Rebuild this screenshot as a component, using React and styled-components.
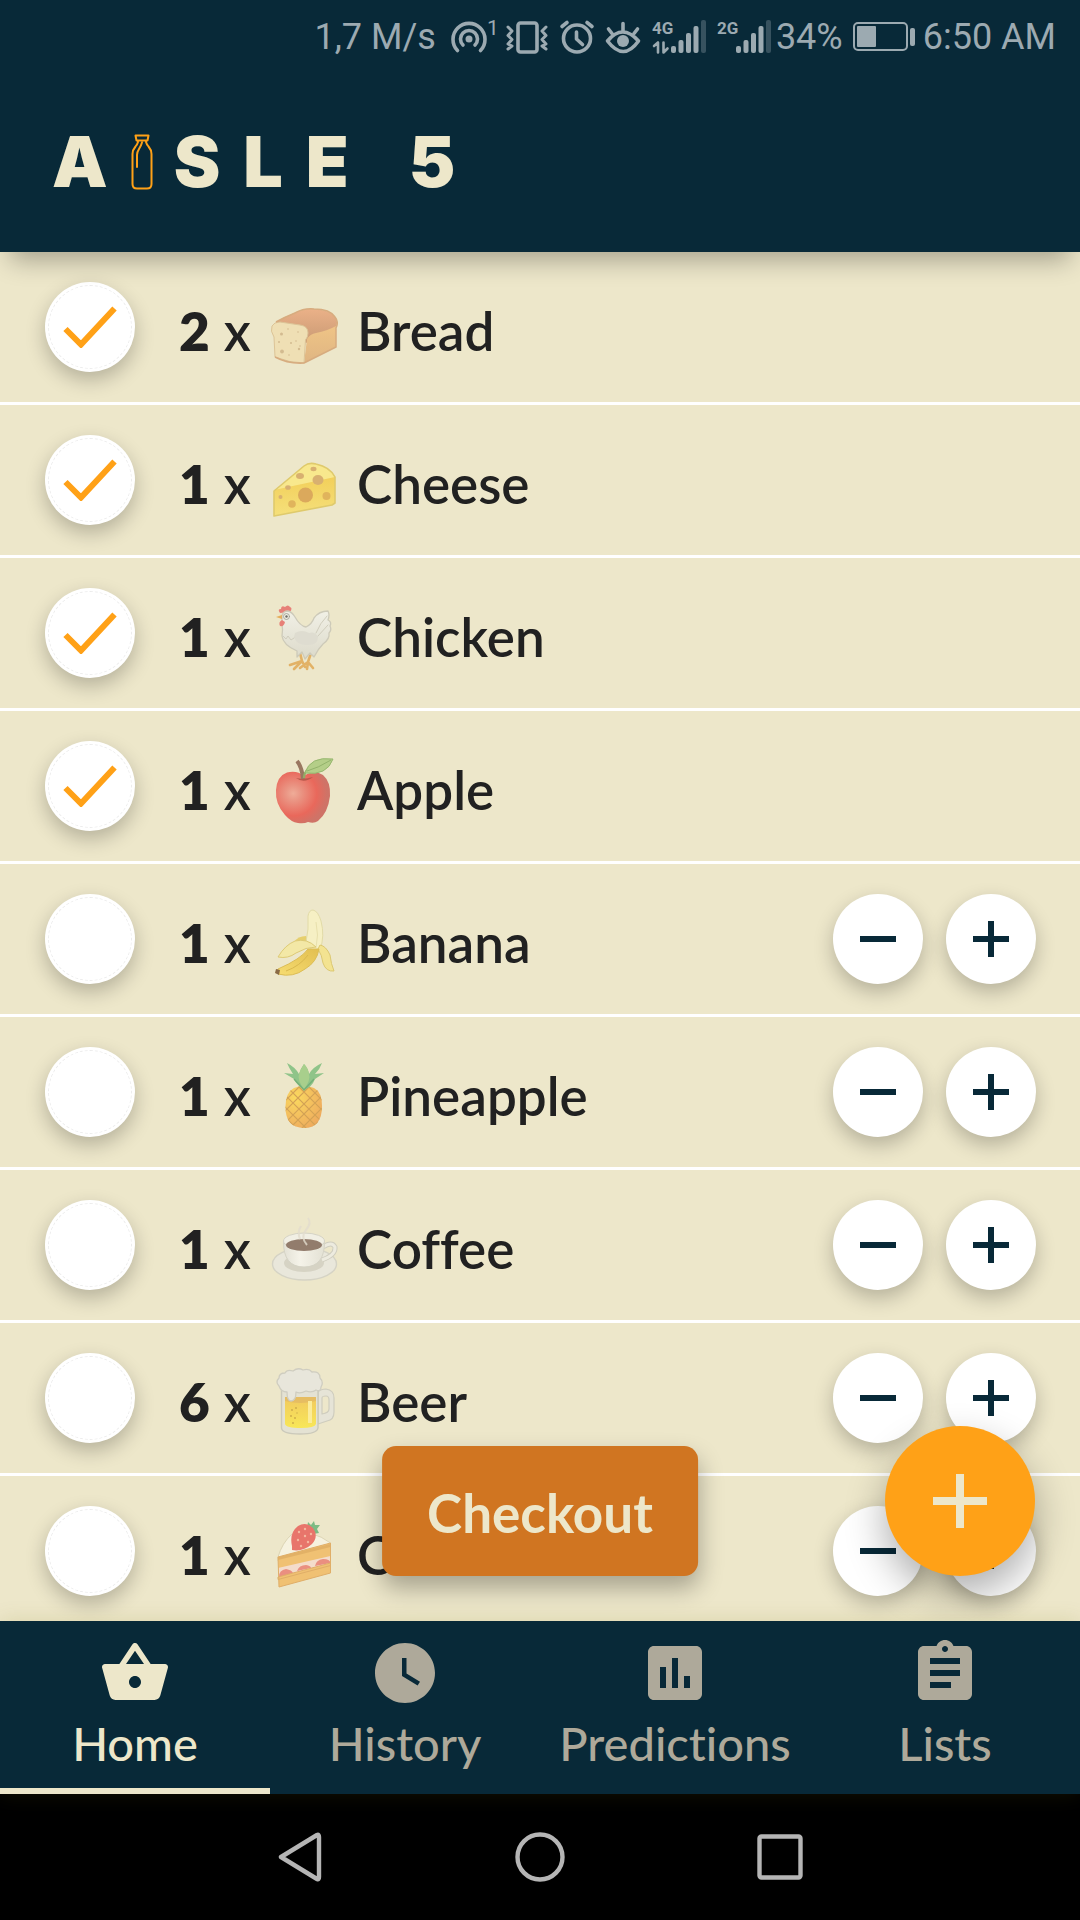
import React from "react";
import styled, { createGlobalStyle, css } from "styled-components";
import { MdShoppingBasket, MdWatchLater, MdAssessment } from "react-icons/md";

const color = {
  navy: "#082938",
  cream: "#ede7ca",
  amber: "#ffa117",
  rust: "#d07521",
  ink: "#212121",
  muted: "#aea99a",
  status: "#9caab1",
  nav: "#b5b5b5",
};

const GlobalStyle = createGlobalStyle`
  * { box-sizing: border-box; }
  html, body { margin: 0; background: #000; }
  body, button, input { font-family: Lato, "Open Sans", sans-serif; }
  body { font-variant-ligatures: none; }
  button { border: 0; padding: 0; cursor: pointer; }
  svg { display: block; flex: none; }
`;

const Screen = styled.div`
  display: flex;
  flex-direction: column;
  height: 100vh;
  overflow: hidden;
`;

const Header = styled.header`
  position: relative;
  z-index: 2;
  flex: none;
  background: ${color.navy};
  box-shadow: 0 18px 24px -10px rgba(0, 0, 0, 0.3);
`;

const StatusBar = styled.div`
  display: flex;
  align-items: center;
  justify-content: flex-end;
  height: 74px;
  padding-right: 24px;
  color: ${color.status};
  font: 400 36px/40px Roboto, sans-serif;
`;

const StatusIcons = styled.div`
  display: flex;
  align-items: center;
  margin: 0 4px 0 14px;
`;

const BatteryIcon = styled.svg`
  margin: 0 7px 0 10px;
`;

const TitleBar = styled.div`
  display: flex;
  align-items: center;
  height: 178px;
  padding: 0 52px 2px;
`;

const Title = styled.h1`
  display: flex;
  align-items: center;
  margin: 0;
  color: ${color.cream};
  font: 900 70px/80px Inter, "Liberation Sans", sans-serif;
  letter-spacing: 23px;
  white-space: pre;
`;

const Bottle = styled.svg`
  margin-right: 21px;
`;

const Main = styled.main`
  position: relative;
  flex: 1;
  min-height: 0;
  background: ${color.cream};
`;

const List = styled.ul`
  height: 100%;
  margin: 0;
  padding: 0;
  overflow-y: auto;
  scrollbar-width: none;
  list-style: none;
`;

const Row = styled.li`
  display: flex;
  align-items: center;
  height: 153px;
  padding: 0 44px 0 45px;
  border-bottom: 3px solid #fff;
`;

const ItemLabel = styled.label`
  display: flex;
  flex: 1;
  align-items: center;
  color: ${color.ink};
  font-size: 53px;
  line-height: 60px;
  font-weight: 600;
`;

const disc = css`
  width: 90px;
  height: 90px;
  border-radius: 50%;
  background: #fff;
  box-shadow: 0 8px 20px rgba(0, 0, 0, 0.24);
`;

const CheckDisc = styled.span`
  ${disc}
  display: grid;
  flex: none;
  margin-right: 44px;
  > * {
    grid-area: 1 / 1;
    place-self: center;
  }
`;

const Tick = styled.input`
  width: 84px;
  height: 84px;
  margin: 0;
  border: 1px dashed #ececec;
  border-radius: 50%;
  appearance: none;
  & + svg {
    visibility: hidden;
    pointer-events: none;
  }
  &:checked + svg {
    visibility: visible;
  }
`;

const Wording = styled.span`
  display: flex;
  align-items: center;
  padding-top: 8px;
`;

const Quantity = styled.span`
  display: flex;
  gap: 14px;
  width: 91px;
  b {
    font-weight: 800;
  }
`;

const Picture = styled.svg`
  width: 68px;
  height: 68px;
  margin-right: 19px;
`;

const Steppers = styled.div`
  display: flex;
  gap: 23px;
`;

const StepButton = styled.button`
  ${disc}
  display: grid;
  place-items: center;
`;

const CheckoutButton = styled.button`
  position: absolute;
  bottom: 45px;
  left: 50%;
  transform: translateX(-50%);
  height: 130px;
  padding: 4px 45px 0;
  border-radius: 14px;
  background: ${color.rust};
  box-shadow: 0 12px 24px rgba(0, 0, 0, 0.3);
  color: ${color.cream};
  font-size: 53px;
  line-height: 60px;
  font-weight: 700;
`;

const AddButton = styled.button`
  position: absolute;
  right: 45px;
  bottom: 45px;
  display: grid;
  place-items: center;
  width: 150px;
  height: 150px;
  border-radius: 50%;
  background: ${color.amber};
  box-shadow: 0 18px 40px rgba(0, 0, 0, 0.32);
`;

const TabBar = styled.nav`
  position: relative;
  z-index: 1;
  display: grid;
  flex: none;
  grid-template-columns: repeat(4, 1fr);
  background: ${color.navy};
  box-shadow: 0 0 20px rgba(120, 110, 10, 0.16);
`;

const Tab = styled.a`
  display: flex;
  flex-direction: column;
  align-items: center;
  gap: 6px;
  height: 173px;
  padding-top: 16px;
  border-bottom: 6px solid ${(p) => (p.$active ? color.cream : "transparent")};
  color: ${(p) => (p.$active ? color.cream : color.muted)};
  font-size: 47px;
  line-height: 56px;
  font-weight: 500;
  text-decoration: none;
`;

const SystemBar = styled.nav`
  display: flex;
  flex: none;
  align-items: center;
  justify-content: center;
  gap: 170px;
  height: 126px;
  background: #000;
`;

const SystemButton = styled.button`
  display: grid;
  place-items: center;
  width: 70px;
  height: 70px;
  background: none;
`;

const stroke = (width) => ({
  fill: "none",
  stroke: "currentColor",
  strokeWidth: width,
  strokeLinecap: "round",
  strokeLinejoin: "round",
});

function SignalBars({ x }) {
  const tops = [45, 39, 32, 25];
  return (
    <g fill="currentColor">
      {tops.map((y, i) => (
        <rect key={y} x={x + i * 7.5} y={y} width="5" height={52 - y} rx="2" />
      ))}
      <rect x={x + 30} y="19" width="5" height="33" rx="2" opacity=".32" />
    </g>
  );
}

function StatusGlyphs() {
  return (
    <svg width="322" height="72" viewBox="450 0 322 72" aria-hidden="true">
      <g {...stroke(3.6)}>
        <path d="M457.500 49.500A16 16 0 1 1 480.500 49.500" />
        <path d="M463 44A8.500 8.500 0 1 1 475 44" />
      </g>
      <circle cx="469" cy="38" r="3.500" fill="currentColor" />
      <text x="487" y="34" fill="currentColor" fontSize="21">1</text>
      <g {...stroke(3.6)}>
        <rect x="518" y="22" width="19" height="29" rx="2.500" />
        <path d="M508 26l4 4-4 4.500 4 4-4 4.500 4 2-4 3M546 26l-4 4 4 4.500-4 4 4 4.500-4 2 4 3" strokeWidth="3" />
        <circle cx="577" cy="37.500" r="13.500" />
        <path d="M576.500 31v7l6 5.500M562 25.500l5-4M592 25.500l-5-4" />
        <path d="M607.500 40q15-18 31 0q-15 21-31 0zM623 22.500v7M608.500 28l3.500 4.500M637.500 28l-3.500 4.500" />
      </g>
      <circle cx="623" cy="40" r="6" fill="currentColor" />
      <g fill="currentColor" fontWeight="700" fontSize="17">
        <text x="652" y="33">4G</text>
        <text x="717" y="33">2G</text>
      </g>
      <path d="M654 45l4-3.500v10M663.500 41.500v10l4-4" {...stroke(2.6)} />
      <SignalBars x={671} />
      <SignalBars x={736} />
    </svg>
  );
}

function Plus({ size, weight, tint }) {
  const c = size / 2;
  return (
    <svg width={size} height={size} stroke={tint} strokeWidth={weight} aria-hidden="true">
      <path d={`M0 ${c}H${size}M${c} 0V${size}`} />
    </svg>
  );
}

function Minus() {
  return (
    <svg width="36" height="6" aria-hidden="true">
      <path d="M0 3H36" stroke={color.navy} strokeWidth="6" />
    </svg>
  );
}

function Clipboard() {
  return (
    <svg width="72" height="72" viewBox="0 0 24 24" fill="currentColor" aria-hidden="true">
      <path
        fillRule="evenodd"
        d="M19 3h-4.180C14.400 1.840 13.300 1 12 1s-2.400.840-2.820 2H5c-1.100 0-2 .900-2 2v14c0 1.100.900 2 2 2h14c1.100 0 2-.900 2-2V5c0-1.100-.900-2-2-2zm-7 0c.550 0 1 .450 1 1s-.450 1-1 1-1-.450-1-1 .450-1 1-1zm2 14H7v-2h7v2zm3-4H7v-2h10v2zm0-4H7V7h10v2z"
      />
    </svg>
  );
}

const bread = (
  <g strokeLinejoin="round">
    <linearGradient id="crust" x1="0" y1="0" x2="0" y2="1">
      <stop offset="0" stopColor="#ebb188" />
      <stop offset="1" stopColor="#c99a74" />
    </linearGradient>
    <linearGradient id="loafSide" x1="0" y1="0" x2="0" y2="1">
      <stop offset="0" stopColor="#efc486" />
      <stop offset="1" stopColor="#dfb582" />
    </linearGradient>
    <path d="M6 25Q14 20 24 16Q34 11 45 12Q66 14 67 25Q67 30 65 32L36 46L20 30z" fill="url(#crust)" />
    <path d="M66 32V50L34 66L37 42Q40 37 46 36Q57 34 66 29z" fill="url(#loafSide)" />
    <path d="M5 60L4 40Q0 34 2 29Q4 25 10 25L30 28Q38 29 38 36Q38 40 35.500 43L34 66Q20 66 5 60z" fill="#efdfb4" stroke="#dcc497" />
    <path d="M5 60Q18 67 34 66L66 50V31Q69 25 65 20Q60 12 44 12Q34 11 25 16Q15 20 6 25" fill="none" stroke="#d7ac7f" strokeWidth="1.500" />
    <g fill="#d3bb90">
      <circle cx="11.500" cy="37" r="1.500" />
      <circle cx="12" cy="54.500" r="1.900" />
      <circle cx="21" cy="46" r="1" />
      <circle cx="28" cy="35" r=".8" />
      <circle cx="18" cy="32" r=".8" />
      <circle cx="29" cy="52" r="1.200" />
      <circle cx="26" cy="44" r=".8" />
      <circle cx="9" cy="45" r="1" />
      <circle cx="19" cy="58" r=".8" />
      <circle cx="30" cy="49" r=".8" />
    </g>
  </g>
);

const cheese = (
  <g>
    <linearGradient id="cut" x1="0" y1="0" x2="0" y2="1">
      <stop offset="0" stopColor="#f2cf5a" />
      <stop offset="1" stopColor="#f5e07b" />
    </linearGradient>
    <path d="M4 41L34 16Q39 12 46 14Q60 17 65 27L64 33L4 42z" fill="#f8e88d" />
    <path d="M4 40L65 27V53L62 55L4 66z" fill="url(#cut)" />
    <path d="M4 41L34 16Q39 12 46 14Q60 17 65 27V53L62 55L4 66z" fill="none" stroke="#dfca6c" strokeWidth="1.600" strokeLinejoin="round" />
    <g fill="#d8b070">
      <circle cx="35.500" cy="45" r="7.500" fill="#dba95c" />
      <ellipse cx="48" cy="30" rx="5.500" ry="5" />
      <ellipse cx="30" cy="26" rx="4" ry="3" />
      <ellipse cx="43.500" cy="19" rx="3" ry="2.200" />
      <ellipse cx="18" cy="37.500" rx="2.800" ry="2.300" />
      <circle cx="10.500" cy="47" r="2" />
      <circle cx="22" cy="54" r="3.800" fill="#e0b45c" />
      <circle cx="56.500" cy="46" r="4" fill="#e0b45c" />
    </g>
  </g>
);

const chicken = (
  <g strokeLinejoin="round" strokeLinecap="round">
    <linearGradient id="plume" x1="0" y1="0" x2="0" y2="1">
      <stop offset="0" stopColor="#f1f0e6" />
      <stop offset="1" stopColor="#dcdaca" />
    </linearGradient>
    <path d="M10 10Q7 6 11 6Q11 2 15 4Q18 1 20 4Q23 5 20 9z" fill="#e78078" />
    <path d="M30 50L32 58L20 62M32 58L24 66M32 58L35 64M42 47L38 59L30 65M38 59L37 66M38 59L43 65" fill="none" stroke="#e2b266" strokeWidth="2.600" />
    <path d="M12 13Q13 8 18 8Q22 9 25 14Q30 23 36 24Q42 21 44 15Q49 8 58 8Q60 12 58 17Q62 19 60 23Q62 27 59 30Q60 36 53 41Q48 46 44 54L40 50L35 56L32 49L27 54L27 48Q13 42 12 33Q13 27 12 20z" fill="url(#plume)" stroke="#cdcab9" strokeWidth="1.300" />
    <path d="M25 30Q32 26 39 30Q45 28 48 34Q48 42 38 42Q27 43 24 34z" fill="#dedcd0" />
    <path d="M46 30Q50 20 57 13M48 33L58 22M13 33l3 3 2-3 3 4 3-2" fill="none" stroke="#d0cdbd" strokeWidth="1" />
    <path d="M12 12L6 14L12 16z" fill="#e5ae5c" />
    <path d="M12 17Q8 19 10 23Q14 24 15 19z" fill="#e78078" />
    <circle cx="16.500" cy="13.500" r="3" fill="#efeee2" stroke="#9b9a8f" strokeWidth=".8" />
    <circle cx="16.500" cy="13.500" r="1.200" fill="#6d6c66" />
  </g>
);

const apple = (
  <g>
    <radialGradient id="skin" cx=".32" cy=".42" r=".62">
      <stop offset="0" stopColor="#efac98" />
      <stop offset=".25" stopColor="#ea9382" />
      <stop offset=".7" stopColor="#e9685b" />
      <stop offset="1" stopColor="#cf7367" />
    </radialGradient>
    <path d="M34 20Q44 13 53 19Q61 26 60 40Q58 57 48 65Q44 68 38 66Q34 68 28 67Q21 66 15 59Q5 48 6 34Q7 20 17 16.500Q27 14 34 20z" fill="url(#skin)" />
    <path d="M26 22Q34 28 43 21Q34 24 26 22z" fill="#b8594c" />
    <path d="M27 5Q32 11 33 23" fill="none" stroke="#9a7760" strokeWidth="4" />
    <path d="M34 22Q34 17 38 13" fill="none" stroke="#93ab65" strokeWidth="2.400" />
    <path d="M35 17Q40 0 63 3Q57 20 35 17z" fill="#b4ce88" stroke="#97b76f" />
    <path d="M37 15Q48 12 61 4" fill="none" stroke="#93b26b" />
  </g>
);

const banana = (
  <g strokeLinejoin="round">
    <linearGradient id="peel" x1="0" y1="1" x2="1" y2="0">
      <stop offset="0" stopColor="#f7dd72" />
      <stop offset="1" stopColor="#e2bf50" />
    </linearGradient>
    <path d="M24 33Q28 27 36 27L40 34L24 35z" fill="#e6cf6d" />
    <path d="M38 7Q39 1 43 1Q48 2 51 12Q55 27 50 41H42L36 33Q39 20 38 7z" fill="#f6f0c4" stroke="#e2dba7" />
    <path d="M46 13Q49 26 46 39" fill="none" stroke="#e8e0ac" />
    <path d="M50 36Q56 37 60 46Q61 55 64 62Q56 63 53 54Q52 46 48 40z" fill="#f3e391" stroke="#dcc870" />
    <path d="M49 40L38 40Q31 50 8 60Q5 62 8 65Q23 69 35 60Q47 53 49 40z" fill="url(#peel)" stroke="#dcbd55" />
    <path d="M46 38Q37 29 25 32Q15 36 8 48Q18 50 26 44Q36 38 46 38z" fill="#f3e8a6" stroke="#ddca76" />
    <path d="M6 60l4 1-1 5-4-2z" fill="#8a6b45" />
    <path d="M38 46Q30 57 16 62" fill="none" stroke="#d9b84e" />
  </g>
);

const pineapple = (
  <g>
    <radialGradient id="rind" cx=".3" cy=".3" r=".8">
      <stop offset="0" stopColor="#fad95f" />
      <stop offset="1" stopColor="#eda75d" />
    </radialGradient>
    <clipPath id="rindShape">
      <path d="M24 26Q34 22 44 26Q52 30 52 44Q52 66 34 66Q15 66 15.500 44Q16 30 24 26z" />
    </clipPath>
    <g clipPath="url(#rindShape)">
      <path d="M14 22H54V68H14z" fill="url(#rind)" />
      <path d="M10 44L34 20M10 54L44 20M12 64L56 20M18 68L58 28M28 70L58 40M38 70L58 50M58 44L34 20M58 54L24 20M56 64L12 20M50 68L10 28M40 70L10 40M30 70L10 50" stroke="#d3a255" strokeWidth="1.200" />
    </g>
    <path d="M34 28Q26 22 24 17L14 11L23 12Q19 6 17 1Q25 5 29 12Q31 6 34 2Q38 6 39 12Q43 5 52 1Q50 7 45 12L54 11L45 17Q42 25 34 28z" fill="#8fc489" />
    <path d="M34 27Q27 18 29 12Q31 6 34 2Q38 6 39 12Q41 18 34 27z" fill="#a8cf8c" />
    <path d="M24 17L34 28L44 17" fill="none" stroke="#74b078" strokeWidth="1.400" />
  </g>
);

const coffee = (
  <g>
    <linearGradient id="cup" x1="0" x2="1">
      <stop offset="0" stopColor="#e3e1d5" />
      <stop offset=".4" stopColor="#f5f3e9" />
      <stop offset="1" stopColor="#e3e1d4" />
    </linearGradient>
    <ellipse cx="34.500" cy="49" rx="32" ry="16" fill="#e9e7db" stroke="#d5d3c5" strokeWidth="1.400" />
    <ellipse cx="34" cy="48" rx="20" ry="9" fill="#d6d3c4" />
    <path d="M53 32Q62 26 65 32Q66 40 52 45" fill="none" stroke="#cfcdbf" strokeWidth="5" />
    <path d="M53 32Q62 26 65 32Q66 40 52 45" fill="none" stroke="#edebdf" strokeWidth="3" />
    <path d="M13.500 26Q13 52 34 52Q55 52 54.500 26z" fill="url(#cup)" stroke="#d5d3c5" />
    <ellipse cx="34" cy="26" rx="20.500" ry="8" fill="#f1efe4" stroke="#d5d3c5" />
    <ellipse cx="34" cy="30" rx="18" ry="6" fill="#927c6c" />
    <path d="M38 3Q42 8 36 15Q30 22 37 30M31 11Q27 17 30 24" fill="none" stroke="#e2dccd" strokeWidth="2" opacity=".8" />
  </g>
);

const beer = (
  <g strokeLinejoin="round">
    <linearGradient id="lager" x1="0" y1="0" x2="0" y2="1">
      <stop offset="0" stopColor="#f1c95f" />
      <stop offset="1" stopColor="#f8e758" />
    </linearGradient>
    <path d="M48 24Q51 21 56 21Q64 22 64 30V44Q64 52 57 53L48 56zM52 30V46Q59 45 59 41V32Q59 28 56 28Q52 28 52 30z" fill="#e6e4d7" stroke="#cfcdbe" strokeWidth="1.200" fillRule="evenodd" />
    <path d="M11.500 18H48V60Q47 66 30 66Q12 66 11.500 60z" fill="#e4e2d3" stroke="#cbc9ba" strokeWidth="1.400" />
    <path d="M15 29H46V56Q45 60 31 60Q16 60 15 56z" fill="url(#lager)" />
    <path d="M15 29H46V33Q30 37 15 33z" fill="#e6bd62" />
    <path d="M38 33h4v22h-4z" fill="#fbec9a" />
    <path d="M9 18Q5 14 9 10Q9 5 15 5Q17 1 23 3Q28 -1 33 2Q39 0 42 4Q50 3 50 10Q54 14 51 19Q51 24 46 22Q42 25 36 23Q30 26 26 24Q26 33 21 33Q17 33 17 24Q11 24 9 18z" fill="#e8e6db" stroke="#cfcdc0" strokeWidth="1.300" />
    <g fill="#cba94a">
      <circle cx="22" cy="42" r=".9" />
      <circle cx="26" cy="40" r=".9" />
      <circle cx="21" cy="48" r=".9" />
      <circle cx="25" cy="50" r=".9" />
      <circle cx="23" cy="55" r=".9" />
      <circle cx="27" cy="45" r=".7" />
    </g>
  </g>
);

const cake = (
  <g strokeLinejoin="round">
    <path d="M8 36Q12 22 22 13Q42 8 60.500 22V26L8 40z" fill="#f6f2df" stroke="#dcd5b5" />
    <path d="M8 36L60.500 22V52L9 66z" fill="#f0c173" />
    <path d="M8 36L60.500 23V26L8 39z" fill="#e2b166" />
    <path d="M8 47L60.500 35V42L8 56z" fill="#f4dccb" />
    <path d="M9 56Q9 49 16 48Q22 49 23 52zM27 50Q29 44 36 44Q41 45 41 47zM45 45Q46 39 53 38Q60 38 60.500 42z" fill="#ea8f80" />
    <path d="M8 56L60.500 42V44.500L8 58.500zM8 36L60.500 22V52L9 66z" fill="none" stroke="#e0ae68" />
    <path d="M37 7L38 1L41 4L44 0L45 4L50 4L47 8L49 12L43 13z" fill="#7dbb84" />
    <path d="M22 25Q19 12 28 5Q36 0 43 7Q49 15 42 23Q33 31 22 29z" fill="#e8756b" />
    <g fill="#f4b79f">
      <circle cx="29" cy="11" r="1.200" />
      <circle cx="35" cy="8" r="1.200" />
      <circle cx="35" cy="15" r="1.200" />
      <circle cx="28" cy="19" r="1.200" />
      <circle cx="41" cy="13" r="1.200" />
      <circle cx="38" cy="21" r="1.200" />
      <circle cx="31" cy="25" r="1.200" />
    </g>
  </g>
);

const items = [
  { qty: 2, art: bread, name: "Bread", done: true },
  { qty: 1, art: cheese, name: "Cheese", done: true },
  { qty: 1, art: chicken, name: "Chicken", done: true },
  { qty: 1, art: apple, name: "Apple", done: true },
  { qty: 1, art: banana, name: "Banana" },
  { qty: 1, art: pineapple, name: "Pineapple" },
  { qty: 1, art: coffee, name: "Coffee" },
  { qty: 6, art: beer, name: "Beer" },
  { qty: 1, art: cake, name: "Cake" },
];

const tabs = [
  { name: "Home", icon: <MdShoppingBasket size={72} />, active: true },
  { name: "History", icon: <MdWatchLater size={72} /> },
  { name: "Predictions", icon: <MdAssessment size={72} /> },
  { name: "Lists", icon: <Clipboard /> },
];

function Item({ qty, art, name, done }) {
  return (
    <Row>
      <ItemLabel>
        <CheckDisc>
          <Tick type="checkbox" defaultChecked={done} />
          <svg width="54" height="42" viewBox="0 0 54 42" aria-hidden="true">
            <path d="M2.500 23L18 38.500L51.500 2.500" fill="none" stroke={color.amber} strokeWidth="6" />
          </svg>
        </CheckDisc>
        <Wording>
          <Quantity>
            <b>{qty}</b>
            <span>x</span>
          </Quantity>
          <Picture viewBox="0 0 68 68" aria-hidden="true">
            {art}
          </Picture>
          {name}
        </Wording>
      </ItemLabel>
      {!done && (
        <Steppers>
          <StepButton aria-label={`One less ${name}`}>
            <Minus />
          </StepButton>
          <StepButton aria-label={`One more ${name}`}>
            <Plus size={36} weight={6} tint={color.navy} />
          </StepButton>
        </Steppers>
      )}
    </Row>
  );
}

export default function App() {
  return (
    <Screen>
      <GlobalStyle />
      <Header>
        <StatusBar>
          <span>1,7 M/s</span>
          <StatusIcons>
            <StatusGlyphs />
          </StatusIcons>
          <span>34%</span>
          <BatteryIcon width="63" height="30" viewBox="0 0 63 30" aria-hidden="true">
            <rect x="1" y="1" width="53" height="27" rx="4" {...stroke(2)} />
            <rect x="4" y="4" width="19" height="21" rx="1" fill="currentColor" />
            <rect x="57" y="6" width="5" height="18" rx="2" fill="currentColor" />
          </BatteryIcon>
          <span>6:50 AM</span>
        </StatusBar>
        <TitleBar>
          <Title>
            A
            <Bottle width="22" height="56" viewBox="0 0 22 56" {...stroke(2)} stroke={color.amber} aria-hidden="true">
              <path d="M4.500 1.500H17.500L16.500 6.500H5.500zM7 8Q6.500 10 4.500 12.500Q1.500 16 1.500 20V50Q1.500 54.500 6 54.500H16Q20.500 54.500 20.500 50V20Q20.500 16 17.500 12.500Q15.500 10 15 8M11 8.500Q10 12 8 15Q6 18 6 21V33" />
            </Bottle>
            SLE 5
          </Title>
        </TitleBar>
      </Header>
      <Main>
        <List>
          {items.map((item) => (
            <Item key={item.name} {...item} />
          ))}
        </List>
        <CheckoutButton>Checkout</CheckoutButton>
        <AddButton aria-label="Add item">
          <Plus size={54} weight={8} tint={color.cream} />
        </AddButton>
      </Main>
      <TabBar>
        {tabs.map((tab) => (
          <Tab key={tab.name} href={`#${tab.name}`} $active={tab.active}>
            {tab.icon}
            {tab.name}
          </Tab>
        ))}
      </TabBar>
      <SystemBar>
        <SystemButton aria-label="Back">
          <svg width="44" height="52" viewBox="0 0 44 52" {...stroke(4.4)} stroke={color.nav}>
            <path d="M39 4L3 26L39 48Q41 49 41 46V6Q41 3 39 4z" />
          </svg>
        </SystemButton>
        <SystemButton aria-label="Home screen">
          <svg width="50" height="50" viewBox="0 0 50 50" {...stroke(4.4)} stroke={color.nav}>
            <circle cx="25" cy="25" r="22.500" />
          </svg>
        </SystemButton>
        <SystemButton aria-label="Recent apps">
          <svg width="46" height="46" viewBox="0 0 46 46" {...stroke(4.4)} stroke={color.nav}>
            <rect x="2.500" y="2.500" width="41" height="41" rx="2" />
          </svg>
        </SystemButton>
      </SystemBar>
    </Screen>
  );
}
